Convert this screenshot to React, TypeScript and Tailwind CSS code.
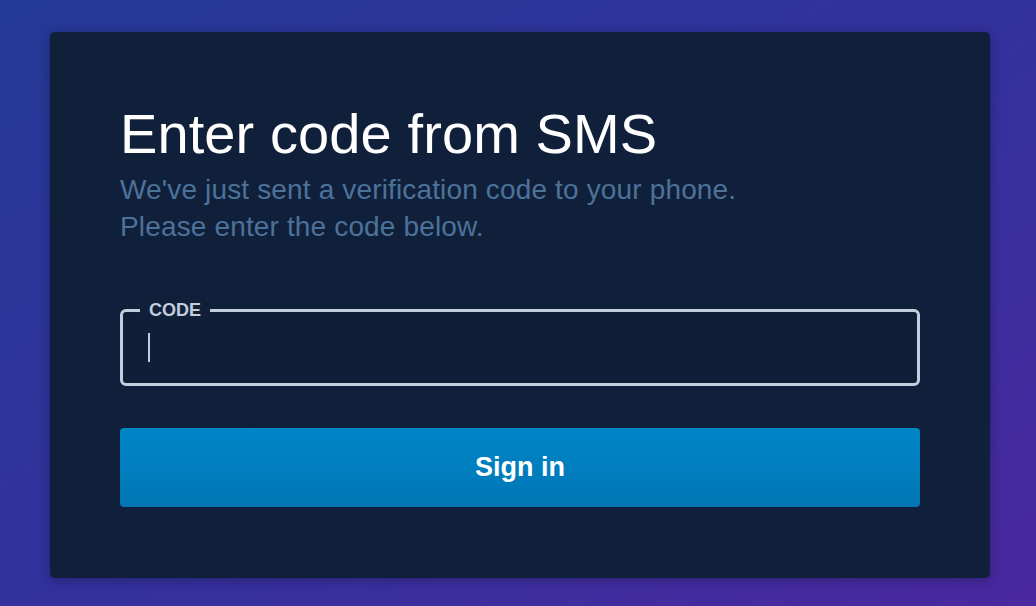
export default function App() {
  return (
    <div className="w-[1036px] h-[606px] overflow-hidden bg-gradient-to-br from-[#243996] via-[#32329c] to-[#4a28a0] pt-[32px] pl-[50px] font-['Liberation_Sans',Arial,sans-serif]">
      <div className="w-[940px] h-[546px] rounded-[5px] bg-[#11203a] shadow-[0_2px_12px_rgba(10,10,40,0.35)] px-[70px] pt-[74px]">
        <h1 className="text-[56px] leading-[56px] text-white font-normal tracking-[0.1px]">
          Enter code from SMS
        </h1>
        <p className="mt-[9px] text-[28px] leading-[37px] tracking-[0.15px] text-[#4c729a]">
          We've just sent a verification code to your phone.
          <br />
          Please enter the code below.
        </p>

        <div className="relative mt-[64px]">
          <div className="h-[77px] rounded-[6px] border-[3px] border-[#c2cedc] bg-[#101e37] flex items-center pl-[25px]">
            <div className="w-[2px] h-[29px] bg-[#c2cedc]" />
          </div>
          <span className="absolute left-[20px] top-[-8px] px-[9px] bg-[#11203a] text-[18px] leading-[18px] font-bold text-[#c2cedc]">
            CODE
          </span>
        </div>

        <button className="mt-[42px] w-full h-[79px] rounded-[4px] bg-gradient-to-b from-[#0086c9] to-[#0076b4] text-white text-[27px] font-bold">
          Sign in
        </button>
      </div>
    </div>
  );
}
